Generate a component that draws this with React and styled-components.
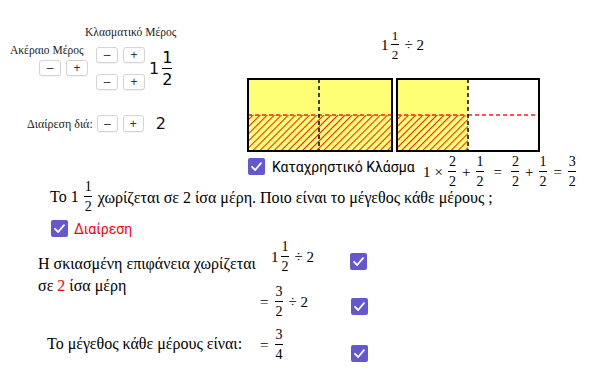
import React from "react";
import styled, { createGlobalStyle } from "styled-components";

const Global = createGlobalStyle`
  html, body { margin: 0; padding: 0; background: #fff; }
  body { width: 602px; height: 376px; overflow: hidden; }
`;

const Canvas = styled.div`
  position: relative;
  width: 602px;
  height: 376px;
  background: #fff;
  font-family: "Liberation Serif", "DejaVu Serif", serif;
  color: #000;
`;

const Placed = styled.div`
  position: absolute;
  left: ${(p) => p.$x}px;
  top: ${(p) => p.$y}px;
`;

const Caption = styled.div`
  font-family: "Liberation Serif", serif;
  font-size: ${(p) => p.$size || 12}px;
  line-height: 1;
  white-space: nowrap;
  color: #222;
`;

const Row = styled.div`
  display: flex;
  align-items: center;
  gap: ${(p) => p.$gap ?? 5}px;
`;

const Column = styled.div`
  display: flex;
  flex-direction: column;
  gap: ${(p) => p.$gap ?? 0}px;
`;

const StepButton = styled.button`
  width: ${(p) => p.$w || 22}px;
  height: ${(p) => p.$h || 16}px;
  padding: 0;
  margin: 0;
  border: 1px solid #d4d4d4;
  border-radius: 3px;
  background: #fff;
  color: #333;
  font-family: "Liberation Sans", sans-serif;
  font-size: 12px;
  line-height: 1;
  display: flex;
  align-items: center;
  justify-content: center;
  box-shadow: 0 1px 1px rgba(0, 0, 0, 0.05);
`;

const SansNum = styled.span`
  font-family: "DejaVu Sans", sans-serif;
  font-size: ${(p) => p.$size || 17}px;
  color: #111;
  line-height: 1;
`;

const MathRow = styled.div`
  display: flex;
  align-items: center;
  font-family: "Liberation Serif", serif;
  font-size: ${(p) => p.$size || 14}px;
  line-height: 1;
  white-space: nowrap;
  gap: ${(p) => p.$gap ?? 1}px;
`;

const FracBox = styled.span`
  display: inline-flex;
  flex-direction: column;
  align-items: center;
  font-family: ${(p) => (p.$sans ? '"DejaVu Sans", sans-serif' : '"Liberation Serif", serif')};
  font-size: ${(p) => p.$size || 14}px;
  line-height: 1;
  margin: 0 ${(p) => (p.$sans ? 1 : 1.5)}px;
`;

const FracBar = styled.span`
  display: block;
  align-self: stretch;
  height: 1px;
  background: #000;
  margin: 2px 0 3px;
  min-width: ${(p) => p.$min || 8}px;
`;

const Op = styled.span`
  padding: 0 ${(p) => p.$pad ?? 3}px;
`;

const Frac = ({ n, d, size, sans, min }) => (
  <FracBox $size={size} $sans={sans}>
    <span>{n}</span>
    <FracBar $min={min} />
    <span>{d}</span>
  </FracBox>
);

const Box = styled.span`
  width: 17px;
  height: 17px;
  border-radius: 2px;
  background: #6557d2;
  display: inline-flex;
  align-items: center;
  justify-content: center;
  flex: none;
`;

const Check = () => (
  <Box>
    <svg width="13" height="13" viewBox="0 0 13 13">
      <polyline points="2,6.8 5.2,10 11,3.2" fill="none" stroke="#fff" strokeWidth="1.8" strokeLinecap="round" strokeLinejoin="round" />
    </svg>
  </Box>
);

const CheckLabel = styled.span`
  font-family: "Roboto", "Open Sans", sans-serif;
  font-size: 14px;
  font-weight: 400;
  color: ${(p) => p.$color || "#000"};
  white-space: nowrap;
`;

const Sentence = styled.div`
  display: flex;
  align-items: center;
  font-family: "Liberation Serif", serif;
  font-size: 16px;
  line-height: 1;
  white-space: nowrap;
  gap: 4px;
`;

const SentenceText = styled.span`
  line-height: 13px;
`;

const Para = styled.div`
  font-family: "Liberation Serif", serif;
  font-size: 16px;
  line-height: 22px;
  white-space: nowrap;
`;

const Red = styled.span`
  color: #ff0000;
`;

const Diagram = () => (
  <svg width="296" height="78" viewBox="0 0 296 78">
    <defs>
      <pattern id="hatch" patternUnits="userSpaceOnUse" width="5" height="5" patternTransform="rotate(45)">
        <line x1="0" y1="0" x2="0" y2="5" stroke="#ff1a1a" strokeWidth="2" />
      </pattern>
    </defs>
    <rect x="1" y="1" width="144" height="36" fill="#ffff75" />
    <rect x="1" y="37" width="144" height="36" fill="#ffff75" />
    <rect x="1" y="37" width="144" height="36" fill="url(#hatch)" />
    <line x1="1" y1="37" x2="145" y2="37" stroke="#ff1a1a" strokeWidth="1.3" strokeDasharray="4 3" />
    <line x1="72" y1="1" x2="72" y2="73" stroke="#000" strokeWidth="1.5" strokeDasharray="4 3" />
    <rect x="1" y="1" width="144" height="72" fill="none" stroke="#000" strokeWidth="2" />
    <rect x="150" y="1" width="71" height="72" fill="#ffff75" />
    <rect x="150" y="37" width="71" height="36" fill="url(#hatch)" />
    <line x1="150" y1="37" x2="221" y2="37" stroke="#ff1a1a" strokeWidth="1.3" strokeDasharray="4 3" />
    <line x1="221" y1="37" x2="292" y2="37" stroke="#ff1a1a" strokeWidth="1.3" strokeDasharray="4 3" />
    <line x1="221" y1="1" x2="221" y2="73" stroke="#000" strokeWidth="1.5" strokeDasharray="4 3" />
    <rect x="150" y="1" width="142" height="72" fill="none" stroke="#000" strokeWidth="2" />
  </svg>
);

export default function App() {
  return (
    <>
      <Global />
      <Canvas>
        <Placed $x={85} $y={27}>
          <Caption $size={11.5}>Κλασματικό Μέρος</Caption>
        </Placed>
        <Placed $x={10} $y={45}>
          <Caption $size={11.5}>Ακέραιο Μέρος</Caption>
        </Placed>
        <Placed $x={39} $y={60}>
          <Row $gap={5}>
            <StepButton>–</StepButton>
            <StepButton>+</StepButton>
          </Row>
        </Placed>
        <Placed $x={96} $y={47}>
          <Column $gap={11}>
            <Row $gap={5}>
              <StepButton>–</StepButton>
              <StepButton>+</StepButton>
            </Row>
            <Row $gap={5}>
              <StepButton>–</StepButton>
              <StepButton>+</StepButton>
            </Row>
          </Column>
        </Placed>
        <Placed $x={149} $y={50}>
          <Row $gap={2}>
            <SansNum $size={16}>1</SansNum>
            <Frac n="1" d="2" sans size={16} min={10} />
          </Row>
        </Placed>
        <Placed $x={27} $y={115}>
          <Row $gap={4}>
            <Caption $size={12}>Διαίρεση διά:</Caption>
            <StepButton $w={21} $h={17}>–</StepButton>
            <StepButton $w={21} $h={17} style={{ marginLeft: 1 }}>+</StepButton>
            <SansNum $size={16} style={{ marginLeft: 8 }}>2</SansNum>
          </Row>
        </Placed>

        <Placed $x={381} $y={29}>
          <MathRow $size={15}>
            <span>1</span>
            <Frac n="1" d="2" size={13} />
            <Op>÷ 2</Op>
          </MathRow>
        </Placed>

        <Placed $x={247} $y={78}>
          <Diagram />
        </Placed>

        <Placed $x={248} $y={158}>
          <Row $gap={7}>
            <Check />
            <CheckLabel>Καταχρηστικό Κλάσμα</CheckLabel>
          </Row>
        </Placed>

        <Placed $x={423} $y={155}>
          <MathRow $size={15} $gap={1}>
            <span>1</span>
            <Op>×</Op>
            <Frac n="2" d="2" size={14} />
            <Op>+</Op>
            <Frac n="1" d="2" size={14} />
            <Op $pad={7}>=</Op>
            <Frac n="2" d="2" size={14} />
            <Op>+</Op>
            <Frac n="1" d="2" size={14} />
            <Op $pad={4}>=</Op>
            <Frac n="3" d="2" size={14} />
          </MathRow>
        </Placed>

        <Placed $x={50} $y={180}>
          <Sentence>
            <span>Το 1</span>
            <Frac n="1" d="2" size={14} />
            <SentenceText>χωρίζεται σε 2 ίσα μέρη. Ποιο είναι το μέγεθος κάθε μέρους ;</SentenceText>
          </Sentence>
        </Placed>

        <Placed $x={51} $y={220}>
          <Row $gap={6}>
            <Check />
            <CheckLabel $color="#ff0000">Διαίρεση</CheckLabel>
          </Row>
        </Placed>

        <Placed $x={38} $y={253}>
          <Para>
            Η σκιασμένη επιφάνεια χωρίζεται
            <br />
            σε <Red>2</Red> ίσα μέρη
          </Para>
        </Placed>

        <Placed $x={271} $y={240}>
          <MathRow $size={15}>
            <span>1</span>
            <Frac n="1" d="2" size={14} />
            <Op>÷ 2</Op>
          </MathRow>
        </Placed>
        <Placed $x={350} $y={253}>
          <Check />
        </Placed>

        <Placed $x={256} $y={285}>
          <MathRow $size={15}>
            <Op $pad={4}>=</Op>
            <Frac n="3" d="2" size={14} />
            <Op>÷ 2</Op>
          </MathRow>
        </Placed>
        <Placed $x={351} $y={298}>
          <Check />
        </Placed>

        <Placed $x={47} $y={333}>
          <Para>Το μέγεθος κάθε μέρους είναι:</Para>
        </Placed>
        <Placed $x={256} $y={328}>
          <MathRow $size={15}>
            <Op $pad={4}>=</Op>
            <Frac n="3" d="4" size={14} />
          </MathRow>
        </Placed>
        <Placed $x={351} $y={345}>
          <Check />
        </Placed>
      </Canvas>
    </>
  );
}
